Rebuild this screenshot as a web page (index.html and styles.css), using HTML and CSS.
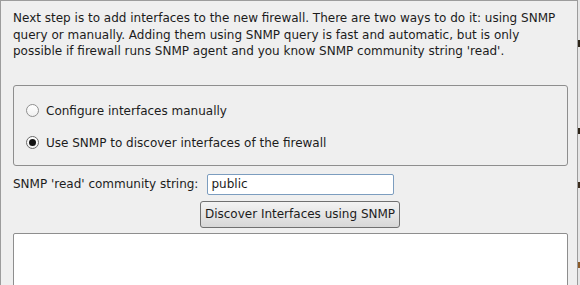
FILE: index.html
```html
<!DOCTYPE html>
<html>
<head>
<meta charset="utf-8">
<link rel="stylesheet" href="styles.css">
</head>
<body>
<div class="window">
  <p class="intro">Next step is to add interfaces to the new firewall. There are two ways to do it: using SNMP<br>query or manually. Adding them using SNMP query is fast and automatic, but is only<br>possible if firewall runs SNMP agent and you know SNMP community string 'read'.</p>
  <div class="group">
    <label class="radio-row"><span class="radio"></span><span>Configure interfaces manually</span></label>
    <label class="radio-row"><span class="radio checked"></span><span>Use SNMP to discover interfaces of the firewall</span></label>
  </div>
  <div class="snmp-row">
    <span class="snmp-label">SNMP 'read' community string:</span>
    <div class="snmp-fields">
      <div class="input">public</div>
      <div class="button">Discover Interfaces using SNMP</div>
    </div>
  </div>
  <div class="log"></div>
</div>
</body>
</html>
```

FILE: styles.css
```css
html, body {
  margin: 0;
  padding: 0;
}
body {
  width: 580px;
  height: 285px;
  overflow: hidden;
  background: linear-gradient(to bottom, #e6e6e6 0 40px, #2c2418 40px 47px, #e6e6e6 47px 128px, #2c2418 128px 134px, #e6e6e6 134px 182px, #3a2c1c 182px 188px, #e6e6e6 188px 262px, #8a5a28 262px 268px, #e6e6e6 268px);
  font-family: "DejaVu Sans", sans-serif;
  font-size: 12px;
  color: #1c1c1c;
}
.window {
  box-sizing: border-box;
  width: 578px;
  height: 285px;
  overflow: hidden;
  background: #efefef;
  border: 1px solid #9c9c9c;
  border-bottom: none;
  padding: 9px 9px 0 12px;
}
.intro {
  margin: 0;
  line-height: 16.5px;
}
.group {
  margin-top: 25px;
  border: 1px solid #8e8e8e;
  border-radius: 3px;
  padding: 17px 12px 14px;
  display: flex;
  flex-direction: column;
  gap: 16px;
}
.radio-row {
  display: flex;
  align-items: center;
  gap: 7px;
  height: 16px;
  line-height: 16px;
}
.radio {
  box-sizing: border-box;
  width: 13px;
  height: 13px;
  border-radius: 50%;
  border: 1px solid #8f8f8f;
  background: linear-gradient(#ffffff, #f0f0f0);
  position: relative;
  flex: none;
}
.radio.checked {
  border-color: #6a6a6a;
}
.radio.checked::after {
  content: "";
  position: absolute;
  left: 2px;
  top: 2px;
  width: 7px;
  height: 7px;
  border-radius: 50%;
  background: #111;
}
.snmp-row {
  margin-top: 8px;
  display: grid;
  grid-template-columns: 187px 200px;
  align-items: start;
}
.snmp-label {
  line-height: 21px;
}
.snmp-fields {
  display: flex;
  flex-direction: column;
  align-items: center;
  gap: 6px;
}
.input {
  box-sizing: border-box;
  width: 187px;
  height: 21px;
  border: 1px solid #7c9dbf;
  border-radius: 2px;
  background: #fff;
  padding-left: 4px;
  line-height: 19px;
}
.button {
  box-sizing: border-box;
  width: 200px;
  height: 27px;
  border: 1px solid #707070;
  border-radius: 3px;
  background: linear-gradient(#f3f3f3, #d7d7d7);
  text-align: center;
  line-height: 25px;
}
.log {
  margin-top: 5px;
  height: 80px;
  background: #fff;
  border: 1px solid #8e8e8e;
  border-radius: 2px;
}
```
